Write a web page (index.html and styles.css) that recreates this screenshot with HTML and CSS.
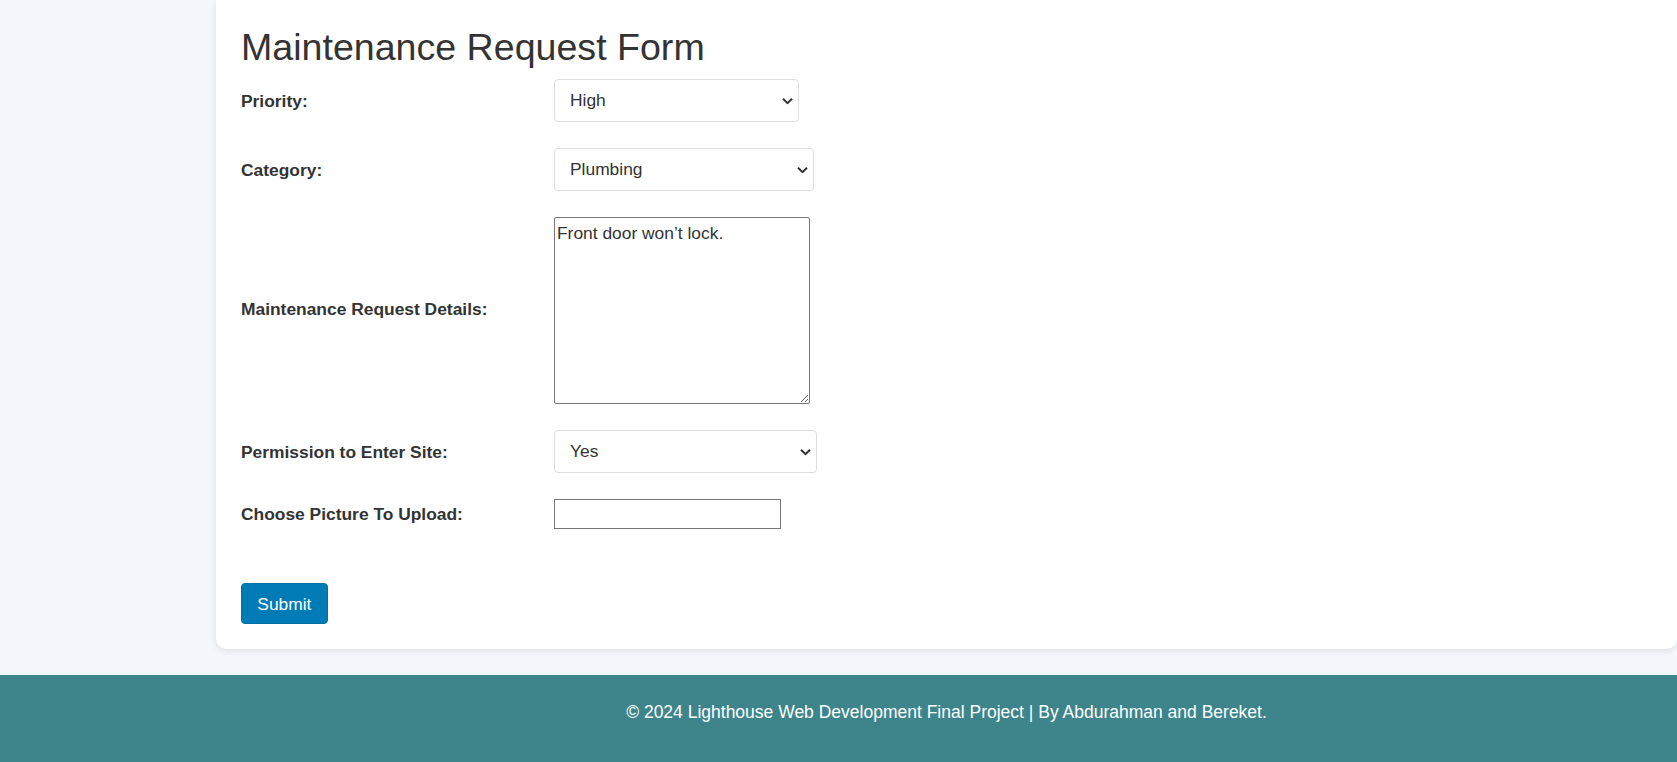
FILE: index.html
```html
<!DOCTYPE html>
<html lang="en">
<head>
<meta charset="utf-8">
<title>Maintenance Request Form</title>
<link rel="stylesheet" href="styles.css">
</head>
<body>
<main class="main">
  <section class="card">
    <h1 class="title">Maintenance Request Form</h1>
    <form class="form">
      <div class="form-grid">
        <label class="label" for="priority">Priority:</label>
        <span class="select-wrap">
          <select id="priority" class="select w-priority">
            <option>High</option>
            <option>Medium</option>
            <option>Low</option>
          </select>
          <svg class="chev" viewBox="0 0 11 7" width="11" height="7" aria-hidden="true"><path d="M1 1.2 L5.5 5.6 L10 1.2" fill="none" stroke="#333" stroke-width="2"/></svg>
        </span>

        <label class="label" for="category">Category:</label>
        <span class="select-wrap">
          <select id="category" class="select w-category">
            <option>Plumbing</option>
            <option>Electrical</option>
            <option>Other</option>
          </select>
          <svg class="chev" viewBox="0 0 11 7" width="11" height="7" aria-hidden="true"><path d="M1 1.2 L5.5 5.6 L10 1.2" fill="none" stroke="#333" stroke-width="2"/></svg>
        </span>

        <label class="label label-tall" for="details">Maintenance Request Details:</label>
        <textarea id="details" class="textarea">Front door won’t lock.</textarea>

        <label class="label" for="permission">Permission to Enter Site:</label>
        <span class="select-wrap">
          <select id="permission" class="select w-permission">
            <option>Yes</option>
            <option>No</option>
          </select>
          <svg class="chev" viewBox="0 0 11 7" width="11" height="7" aria-hidden="true"><path d="M1 1.2 L5.5 5.6 L10 1.2" fill="none" stroke="#333" stroke-width="2"/></svg>
        </span>

        <label class="label" for="picture">Choose Picture To Upload:</label>
        <span class="file-box" id="picture"></span>
      </div>
      <button type="button" class="submit">Submit</button>
    </form>
  </section>
</main>
<footer class="footer">
  <p class="footer-text">© 2024 Lighthouse Web Development Final Project | By Abdurahman and Bereket.</p>
</footer>
</body>
</html>
```

FILE: styles.css
```css
* {
  box-sizing: border-box;
}

html, body {
  margin: 0;
  padding: 0;
}

body {
  background: #f4f7fb;
  font-family: "Liberation Sans", Arial, sans-serif;
  font-size: 17.4px;
  color: #333;
}

.main {
  margin-left: 216px;
}

.card {
  background: #fff;
  border-radius: 0 0 10px 10px;
  box-shadow: 0 2px 7px rgba(0, 0, 0, 0.1);
  padding: 25.6px 25px 25px 25px;
}

.title {
  margin: 0 0 10.7px 0;
  font-size: 37.6px;
  line-height: 43px;
  font-weight: normal;
  color: #333;
}

.form-grid {
  display: grid;
  grid-template-columns: 313px auto;
  row-gap: 26px;
  align-items: center;
  justify-items: start;
}

.label {
  font-weight: bold;
  line-height: 20px;
  color: #333;
}

.label-tall {
  margin-bottom: 4px;
}

.select-wrap {
  position: relative;
  display: inline-block;
}

.select {
  appearance: none;
  -webkit-appearance: none;
  display: block;
  height: 43px;
  padding: 10px 15px;
  border: 1px solid #ddd;
  border-radius: 4px;
  background: #fff;
  font-family: "Liberation Sans", Arial, sans-serif;
  font-size: 17.4px;
  line-height: 21px;
  color: #333;
}

.w-priority { width: 244.5px; }
.w-category { width: 259.5px; }
.w-permission { width: 263px; }

.chev {
  position: absolute;
  right: 6px;
  top: 50%;
  transform: translateY(-50%);
  pointer-events: none;
}

.textarea {
  display: block;
  width: 256px;
  height: 187px;
  padding: 5px 2px 2px 2px;
  border: 1px solid #767676;
  border-radius: 2px;
  font-family: "Liberation Sans", Arial, sans-serif;
  font-size: 17.4px;
  line-height: 20px;
  color: #333;
  background: #fff;
}

.file-box {
  display: block;
  width: 227px;
  height: 30px;
  border: 1px solid #767676;
  background: #fff;
}

.submit {
  display: block;
  margin-top: 54px;
  height: 41px;
  padding: 0 15.3px;
  border: 1px solid #006fa4;
  border-radius: 4px;
  background: #007bb6;
  color: #fff;
  font-family: "Liberation Sans", Arial, sans-serif;
  font-size: 17.4px;
  line-height: 20px;
}

.footer {
  margin-top: 25.7px;
  background: #3d858b;
  padding: 27px 0 45px 216px;
}

.footer-text {
  margin: 0;
  text-align: center;
  color: #fff;
  font-size: 17.5px;
  line-height: 20px;
}
```
